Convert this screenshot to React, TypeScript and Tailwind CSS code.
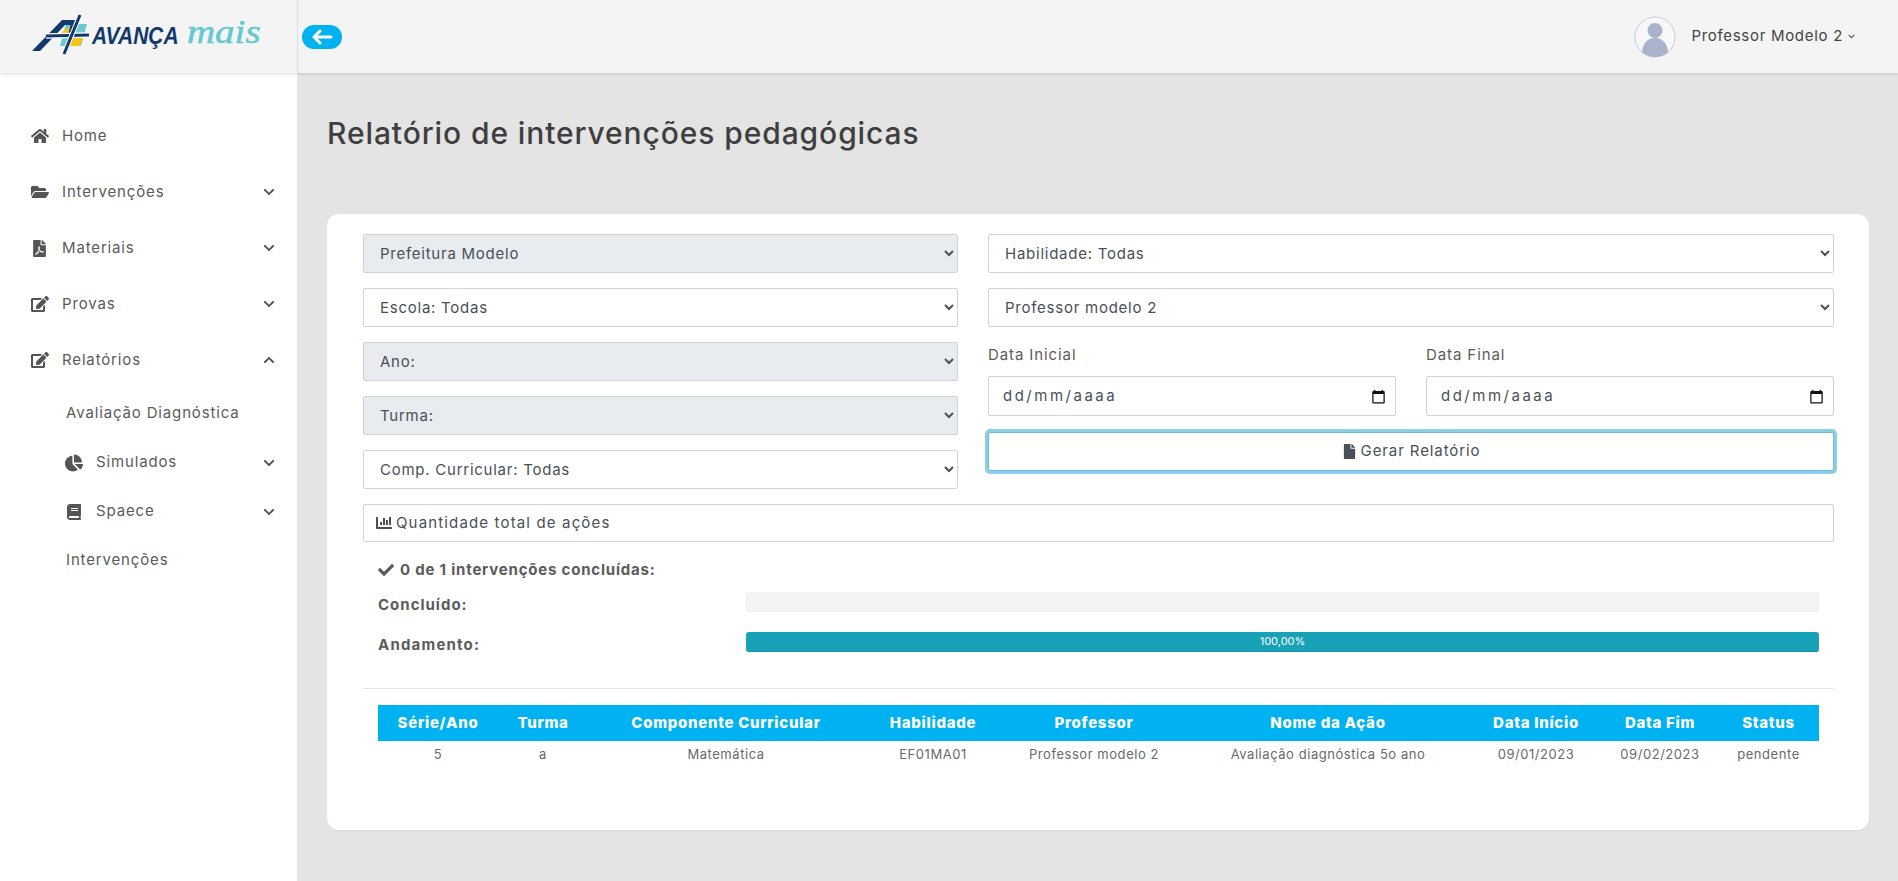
import React from "react";
import { FaHome, FaFolderOpen, FaFilePdf, FaEdit, FaChartPie, FaBook, FaFile, FaChartBar, FaCheck, FaChevronDown, FaChevronUp } from "react-icons/fa";

const font = { fontFamily: '"Inter","Open Sans",sans-serif' };

function Logo() {
  return (
    <svg width="240" height="45" viewBox="31 14 240 45" className="block">
      <polygon points="66,24 87,24 81,46 60,46" fill="#6cc9d1" />
      <polygon points="71,38 83,38 80,46 68,46" fill="#f5c518" />
      <polygon points="70,26 68,33 61,33" fill="#f5c518" />
      <polygon points="32,51 62,20 75,20 74,25 65,25 40,51" fill="#12386c" />
      <line x1="73" y1="22" x2="67" y2="49" stroke="#12386c" strokeWidth="3.500" />
      <line x1="46" y1="36" x2="89" y2="35" stroke="#ffffff" strokeWidth="5.500" />
      <line x1="46" y1="36" x2="89" y2="35" stroke="#12386c" strokeWidth="3" />
      <line x1="80" y1="15" x2="64" y2="54" stroke="#ffffff" strokeWidth="5" />
      <line x1="80" y1="15" x2="64" y2="54" stroke="#12386c" strokeWidth="3" />
      <text transform="translate(92 44) scale(1 1.18)" fontFamily="Liberation Sans" fontStyle="italic" fontWeight="700" fontSize="21" fill="#12386c">AVANÇA</text>
      <text transform="translate(187 43) scale(1.18 1)" fontFamily="Liberation Serif" fontStyle="italic" fontSize="33" fill="#66c8d2" stroke="#66c8d2" strokeWidth="0.500">mais</text>
    </svg>
  );
}

function Avatar() {
  return (
    <svg width="42" height="42" viewBox="0 0 42 42">
      <defs>
        <clipPath id="av"><circle cx="21" cy="21" r="20" /></clipPath>
      </defs>
      <circle cx="21" cy="21" r="20" fill="#f7f7f7" stroke="#c4cde0" strokeWidth="1" />
      <g clipPath="url(#av)" fill="#a9b4cc">
        <circle cx="21" cy="14.500" r="7.500" />
        <path d="M8 38c0-10 5-16 13-16s13 6 13 16v4H8z" />
      </g>
    </svg>
  );
}

function NavItem({ icon, label, open, hasChevron = true }: { icon: React.ReactNode; label: string; open?: boolean; hasChevron?: boolean }) {
  return (
    <div className="flex h-[56px] items-center pl-[30px] pr-[22px] text-[15px] text-[#5b5b5b]">
      <span className="flex w-[19px] justify-center text-[#555555]">{icon}</span>
      <span className="ml-[13px] flex-1 tracking-[0.85px]">{label}</span>
      {hasChevron && (open ? <FaChevronUp size={12} className="text-[#555555]" /> : <FaChevronDown size={12} className="text-[#555555]" />)}
    </div>
  );
}

function SubItem({ icon, label }: { icon?: React.ReactNode; label: string }) {
  return (
    <div className={`flex h-[49px] items-center pr-[22px] text-[15px] text-[#5b5b5b] ${icon ? "pl-[65px]" : "pl-[66px]"}`}>
      {icon && <span className="flex w-[18px] justify-center text-[#555555]">{icon}</span>}
      <span className={icon ? "ml-[13px] flex-1 tracking-[0.85px]" : "flex-1 tracking-[0.85px]"}>{label}</span>
      {icon && <FaChevronDown size={12} className="text-[#555555]" />}
    </div>
  );
}

function Sel({ label, muted }: { label: string; muted?: boolean }) {
  return (
    <select
      style={font}
      className={`block h-[39px] w-full rounded-[2px] border border-[#ced4da] pl-[12px] pr-[4px] text-[15px] tracking-[0.75px] text-[#495057] ${muted ? "bg-[#e9ecef]" : "bg-white"}`}
      defaultValue={label}
    >
      <option>{label}</option>
    </select>
  );
}

function DateField({ label }: { label: string }) {
  return (
    <div className="flex-1">
      <div className="h-[34px] text-[15px] leading-[26px] tracking-[0.9px] text-[#5b5b5b]">{label}</div>
      <div className="flex h-[40px] items-center justify-between rounded-[2px] border border-[#ced4da] bg-white pl-[14px] pr-[9px] text-[15px] tracking-[2.5px] text-[#495057]">
        <span>dd/mm/aaaa</span>
        <svg width="15" height="15" viewBox="0 0 24 24" fill="#111111"><path d="M20 3h-1V1h-2v2H7V1H5v2H4c-1.100 0-2 .9-2 2v16c0 1.100.9 2 2 2h16c1.100 0 2-.9 2-2V5c0-1.100-.9-2-2-2zm0 18H4V8h16v13z" /></svg>
      </div>
    </div>
  );
}

const cols = [120, 90, 276, 138, 184, 284, 132, 116, 101];
const heads = ["Série/Ano", "Turma", "Componente Curricular", "Habilidade", "Professor", "Nome da Ação", "Data Início", "Data Fim", "Status"];
const row = ["5", "a", "Matemática", "EF01MA01", "Professor modelo 2", "Avaliação diagnóstica 5o ano", "09/01/2023", "09/02/2023", "pendente"];

export default function App() {
  return (
    <div style={font} className="flex h-[881px] w-full flex-col overflow-hidden bg-[#e4e4e4]">
      <header className="relative z-10 flex h-[73px] shrink-0 items-center bg-[#f4f4f4] shadow-[0_1px_3px_rgba(0,0,0,0.15)]">
        <div className="flex h-full w-[298px] shrink-0 items-center border-r border-[#dddddd] pl-[31px]">
          <Logo />
        </div>
        <button className="ml-[4px] flex h-[24px] w-[40px] items-center justify-center rounded-full bg-[#00b2f0] text-white">
          <svg width="22" height="16" viewBox="0 0 22 16" fill="none" stroke="#ffffff" strokeWidth="3" strokeLinecap="round" strokeLinejoin="round">
            <path d="M20 8H3M9 2L3 8l6 6" />
          </svg>
        </button>
        <div className="ml-auto flex items-center pr-[43px]">
          <Avatar />
          <span className="ml-[15px] text-[15px] tracking-[0.7px] text-[#444444]">Professor Modelo 2</span>
          <FaChevronDown size={7} className="ml-[5px] text-[#444444]" />
        </div>
      </header>
      <div className="flex min-h-0 flex-1">
        <aside className="w-[297px] shrink-0 bg-white pt-[35px]">
          <NavItem icon={<FaHome size={18} />} label="Home" hasChevron={false} />
          <NavItem icon={<FaFolderOpen size={18} />} label="Intervenções" />
          <NavItem icon={<FaFilePdf size={17} />} label="Materiais" />
          <NavItem icon={<FaEdit size={18} />} label="Provas" />
          <NavItem icon={<FaEdit size={18} />} label="Relatórios" open />
          <div className="pt-[1px]">
            <SubItem label="Avaliação Diagnóstica" />
            <SubItem icon={<FaChartPie size={18} />} label="Simulados" />
            <SubItem icon={<FaBook size={16} />} label="Spaece" />
            <SubItem label="Intervenções" />
          </div>
        </aside>
        <main className="min-w-0 flex-1 pl-[30px] pr-[29px]">
          <h1 className="mt-[41px] h-[100px] text-[30px] font-medium leading-[38px] tracking-[0.9px] text-[#3f3f3f]">Relatório de intervenções pedagógicas</h1>
          <section className="h-[616px] rounded-[12px] bg-white pl-[36px] pr-[35px] pt-[20px] shadow-[0_1px_2px_rgba(0,0,0,0.05)]">
            <div className="grid grid-cols-[595px_846px] gap-x-[30px]">
              <div className="flex flex-col gap-[15px]">
                <Sel label="Prefeitura Modelo" muted />
                <Sel label="Escola: Todas" />
                <Sel label="Ano:" muted />
                <Sel label="Turma:" muted />
                <Sel label="Comp. Curricular: Todas" />
              </div>
              <div className="flex flex-col">
                <Sel label="Habilidade: Todas" />
                <div className="mt-[15px]"><Sel label="Professor modelo 2" /></div>
                <div className="mt-[15px] flex gap-[30px]">
                  <DateField label="Data Inicial" />
                  <DateField label="Data Final" />
                </div>
                <button className="mt-[16px] flex h-[39px] items-center justify-center gap-[4px] rounded-[2px] border border-[#70b6ea] bg-white text-[15px] tracking-[0.9px] text-[#495057] shadow-[0_0_0_3px_#8ad0e0]">
                  <FaFile size={15} />
                  <span>Gerar Relatório</span>
                </button>
              </div>
            </div>
            <div className="mt-[15px] flex h-[38px] items-center gap-[4px] rounded-[2px] border border-[#d0d3d8] bg-white pl-[12px] text-[15px] tracking-[1.15px] text-[#495057]">
              <FaChartBar size={16} />
              <span>Quantidade total de ações</span>
            </div>
            <div className="mt-[17px] flex items-center gap-[6px] pl-[15px] text-[15px] font-bold leading-[22px] tracking-[0.8px] text-[#5b5b5b]">
              <FaCheck size={16} />
              <span>0 de 1 intervenções concluídas:</span>
            </div>
            <div className="mt-[11px] flex h-[20px] items-start pl-[15px] pr-[15px]">
              <span className="mt-[2px] w-[368px] text-[15px] font-bold leading-[22px] tracking-[1px] text-[#5b5b5b]">Concluído:</span>
              <div className="h-[20px] flex-1 rounded-[3px] border border-[#eeeeee] bg-[#f4f4f4]" />
            </div>
            <div className="mt-[20px] flex h-[20px] items-start pl-[15px] pr-[15px]">
              <span className="mt-[2px] w-[368px] text-[15px] font-bold leading-[22px] tracking-[1.2px] text-[#5b5b5b]">Andamento:</span>
              <div className="flex h-[20px] flex-1 items-center justify-center rounded-[3px] border-b border-[#1590a5] bg-[#18a2b8] text-[11px] text-white">100,00%</div>
            </div>
            <div className="mt-[36px] border-t border-[#e3e3e3]" />
            <div className="mt-[16px] px-[15px]">
              <table className="w-[1441px] table-fixed border-collapse">
                <colgroup>
                  {cols.map((w, i) => <col key={i} style={{ width: w }} />)}
                </colgroup>
                <thead>
                  <tr className="h-[36px] bg-[#00b2f2] text-white">
                    {heads.map((h) => <th key={h} className="text-center text-[15px] font-extrabold tracking-[0.7px]">{h}</th>)}
                  </tr>
                </thead>
                <tbody>
                  <tr className="h-[28px] text-[#6a6a6a]">
                    {row.map((c, i) => <td key={i} className="text-center text-[13px] tracking-[0.55px]">{c}</td>)}
                  </tr>
                </tbody>
              </table>
            </div>
          </section>
        </main>
      </div>
    </div>
  );
}
